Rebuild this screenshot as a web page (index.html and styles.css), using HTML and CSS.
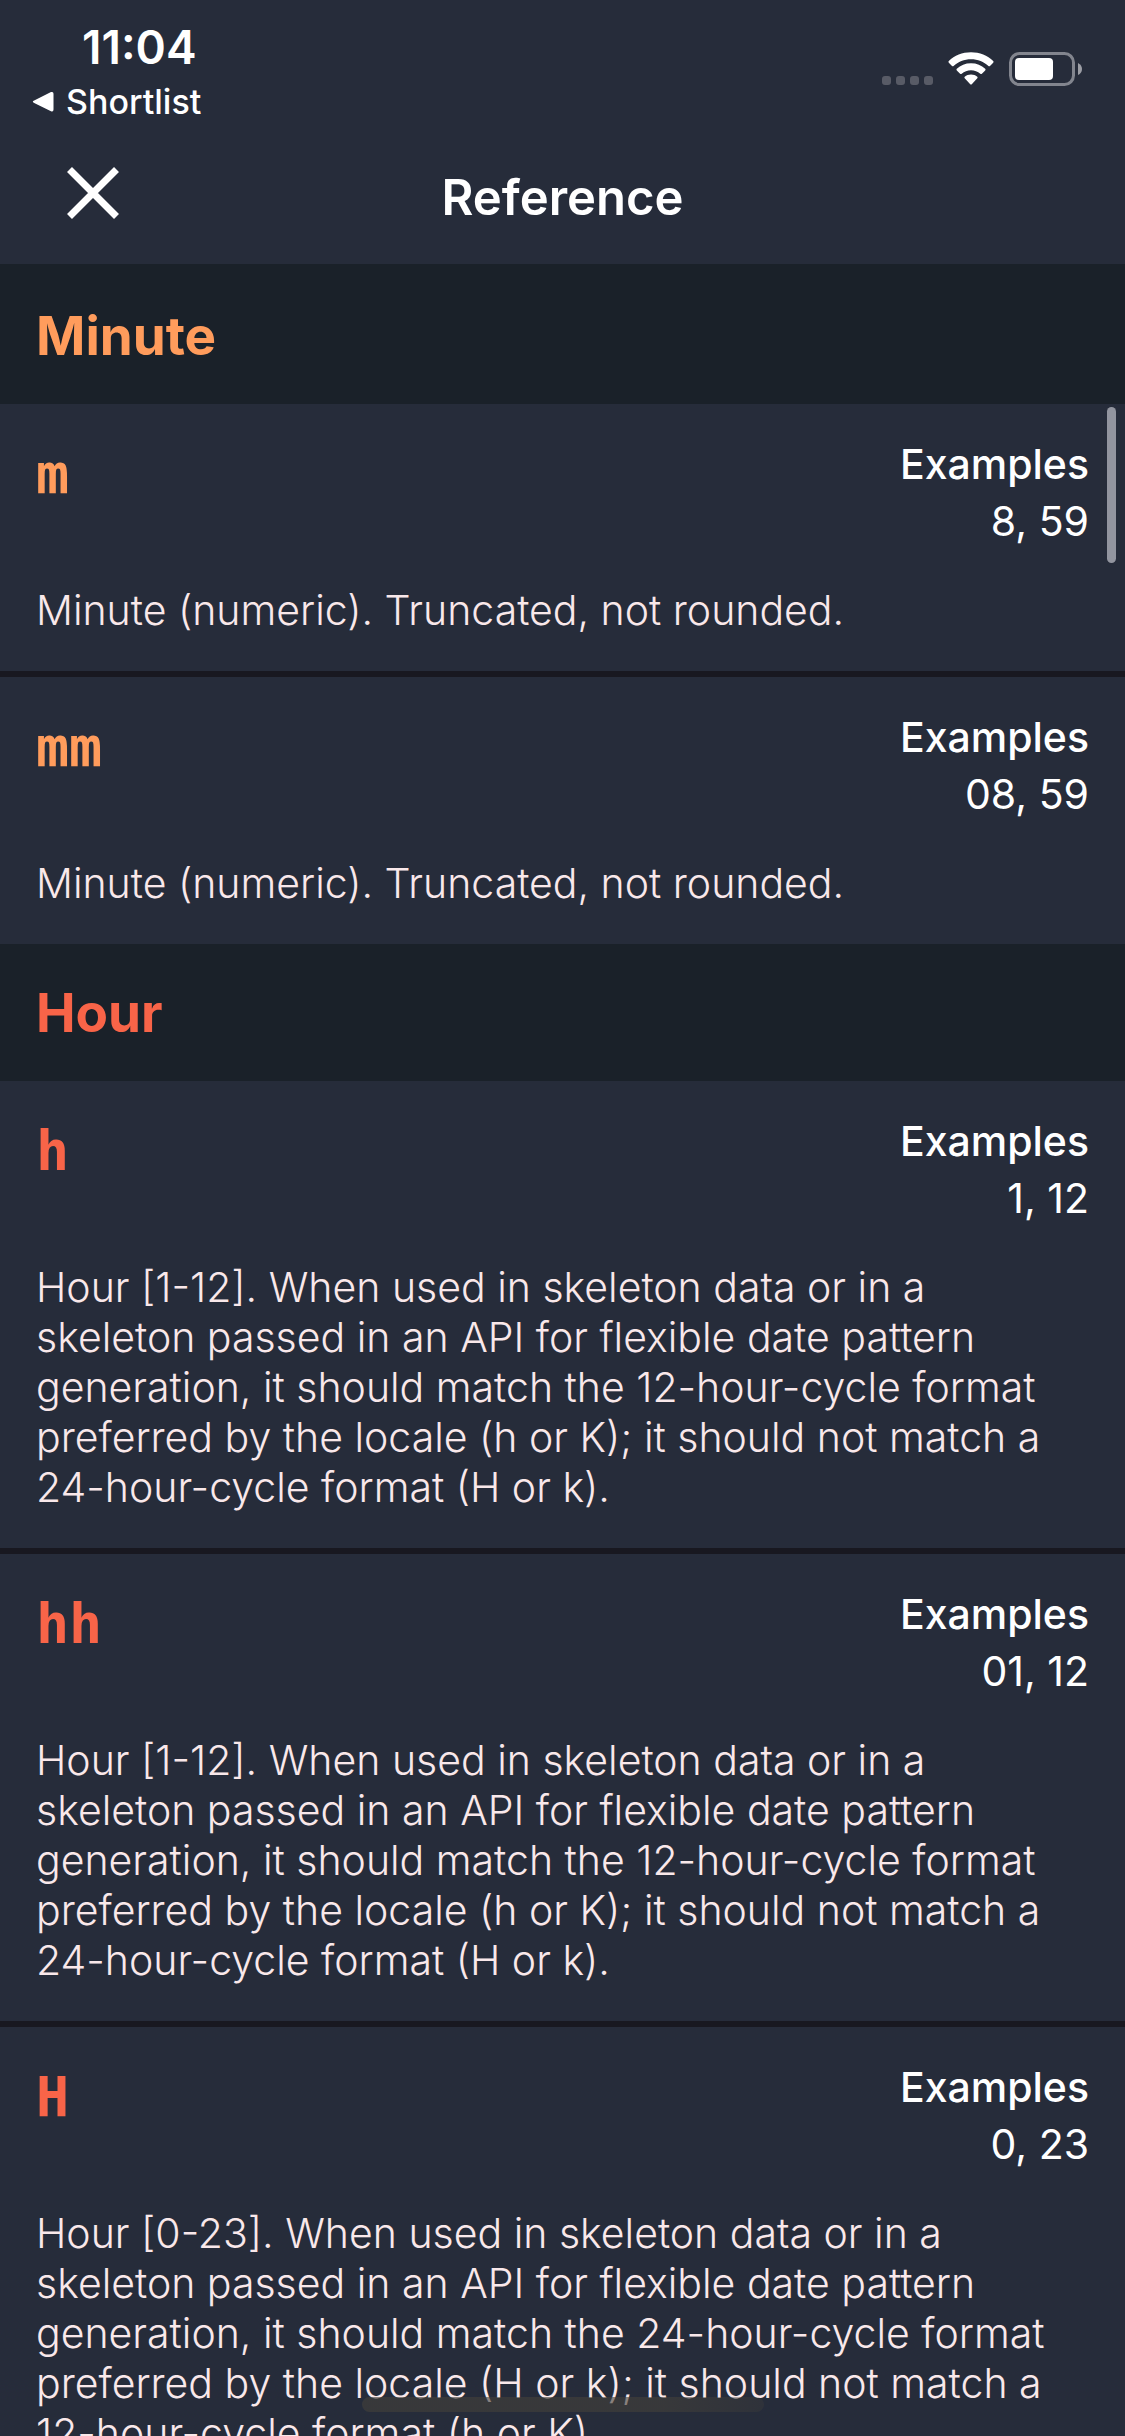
FILE: index.html
```html
<!DOCTYPE html>
<html lang="en">
<head>
<meta charset="utf-8">
<meta name="viewport" content="width=device-width, initial-scale=1">
<title>Reference</title>
<link rel="stylesheet" href="styles.css">
</head>
<body>
<div class="screen">
  <header class="top">
    <div class="status">
      <div class="status-left">
        <time class="clock">11:04</time>
        <a class="back" href="#shortlist">
          <svg class="back-arrow" width="22" height="22" viewBox="0 0 22 22" aria-hidden="true"><path d="M2.2 9.6 19 1.1Q21.5 .3 21.5 2.8V18.6Q21.5 21.2 19 20.3L2.2 12Q-.6 10.800 2.2 9.600Z" fill="#fff"/></svg>
          <span>Shortlist</span>
        </a>
      </div>
      <div class="status-right">
        <svg width="51" height="9" viewBox="0 0 51 9" class="signal" role="img" aria-label="No signal"><g fill="#585b66"><rect width="9" height="9" rx="3"/><rect x="14" width="9" height="9" rx="3"/><rect x="28" width="9" height="9" rx="3"/><rect x="42" width="9" height="9" rx="3"/></g></svg>
        <svg width="46" height="34" viewBox="0 0 46 34" class="wifi" role="img" aria-label="Wi-Fi"><path fill="#fff" d="M23 .3C31.700 .3 39.500 3.600 45.200 9Q46 9.900 45.200 10.700L42 13.900Q41.200 14.600 40.400 13.900C36 9.700 29.700 7.200 23 7.200S10 9.700 5.600 13.900Q4.800 14.600 4 13.900L.8 10.700Q0 9.900 .8 9C6.500 3.600 14.300 .3 23 .3ZM23 11.300C28.600 11.300 33.500 13.300 37.200 16.800Q38 17.600 37.200 18.400L33.900 21.700Q33.100 22.400 32.300 21.700C29.700 19.500 26.500 18.300 23 18.300S16.300 19.500 13.700 21.700Q12.900 22.400 12.100 21.700L8.800 18.400Q8 17.600 8.800 16.800C12.500 13.300 17.400 11.300 23 11.300ZM23 22.400C25.500 22.400 27.600 23.200 29.300 24.700Q30 25.400 29.300 26.200L24 31.900Q23 32.900 22 31.900L16.700 26.200Q16 25.400 16.700 24.700C18.400 23.200 20.500 22.400 23 22.400Z"/></svg>
        <svg width="74" height="34" viewBox="0 0 74 34" role="img" aria-label="Battery"><rect x="1.500" y="1.500" width="63" height="31" rx="9" fill="none" stroke="#82858e" stroke-width="3"/><rect x="6" y="6" width="38" height="22" rx="4" fill="#fff"/><path d="M69 11Q73 13 73 17T69 23Z" fill="#9c9ea5"/></svg>
      </div>
    </div>
    <div class="nav">
      <button class="close" type="button" aria-label="Close"><svg width="52" height="52" viewBox="0 0 52 52" aria-hidden="true"><path d="M2.500 2.500 49.500 49.500M49.500 2.500 2.500 49.500" stroke="#fff" stroke-width="7"/></svg></button>
      <h1 class="title">Reference</h1>
    </div>
  </header>
  <main class="list">
    <section class="group minute">
      <h2 class="group-title first">Minute</h2>
      <article class="item">
        <div class="row"><h3 class="code">m</h3><dl class="examples"><dt>Examples</dt><dd>8, 59</dd></dl></div>
        <p class="desc">Minute (numeric). Truncated, not rounded.</p>
      </article>
      <article class="item">
        <div class="row"><h3 class="code">mm</h3><dl class="examples"><dt>Examples</dt><dd>08, 59</dd></dl></div>
        <p class="desc">Minute (numeric). Truncated, not rounded.</p>
      </article>
    </section>
    <section class="group hour">
      <h2 class="group-title">Hour</h2>
      <article class="item">
        <div class="row"><h3 class="code">h</h3><dl class="examples"><dt>Examples</dt><dd>1, 12</dd></dl></div>
        <p class="desc">Hour [1-12]. When used in skeleton data or in a skeleton passed in an API for flexible date pattern generation, it should match the 12-hour-cycle format preferred by the locale (h or K); it should not match a 24-hour-cycle format (H or k).</p>
      </article>
      <article class="item">
        <div class="row"><h3 class="code">hh</h3><dl class="examples"><dt>Examples</dt><dd>01, 12</dd></dl></div>
        <p class="desc">Hour [1-12]. When used in skeleton data or in a skeleton passed in an API for flexible date pattern generation, it should match the 12-hour-cycle format preferred by the locale (h or K); it should not match a 24-hour-cycle format (H or k).</p>
      </article>
      <article class="item">
        <div class="row"><h3 class="code">H</h3><dl class="examples"><dt>Examples</dt><dd>0, 23</dd></dl></div>
        <p class="desc">Hour [0-23]. When used in skeleton data or in a skeleton passed in an API for flexible date pattern generation, it should match the 24-hour-cycle format preferred by the locale (H or k); it should not match a 12-hour-cycle format (h or K).</p>
      </article>
    </section>
    <div class="scroll-thumb"></div>
  </main>
  <div class="home-bar"></div>
</div>
</body>
</html>
```
FILE: styles.css
```css
* { box-sizing: border-box; }
body, h1, h2, h3, p, dl, dd { margin: 0; }
body {
  background: #262c3a;
  color: #fff;
  font-family: Inter, "Liberation Sans", sans-serif;
}
.screen {
  position: relative;
  display: flex;
  flex-direction: column;
  height: 100vh;
  overflow: hidden;
}
.top { flex: none; padding-bottom: 25px; }
.status {
  display: flex;
  justify-content: space-between;
  padding: 20px 42px 0 32px;
}
.status-left { display: flex; flex-direction: column; }
.clock {
  padding-left: 50px;
  font-size: 46px;
  line-height: 54px;
  font-weight: 600;
}
.back {
  display: flex;
  align-items: center;
  gap: 12px;
  margin-top: 8px;
  color: #fff;
  font-size: 34px;
  line-height: 40px;
  font-weight: 500;
  text-decoration: none;
}
.status-right {
  display: flex;
  align-items: flex-end;
  height: 66px;
  gap: 15px;
}
.signal { margin-bottom: 1px; }
.nav {
  display: grid;
  grid-template-columns: 1fr auto 1fr;
  align-items: start;
  padding: 0 67px;
  margin-top: 35px;
}
.close {
  width: 52px;
  height: 52px;
  margin: 10px 0 0;
  padding: 0;
  border: 0;
  background: none;
}
.close svg { display: block; }
.title { font-size: 49px; line-height: 82px; font-weight: 600; }
.list { position: relative; flex: 1; min-height: 0; overflow: hidden; }
.minute { --accent: #ff9c5c; }
.hour { --accent: #f86448; }
.group-title {
  padding: 38px 36px 37px;
  background: #1a2129;
  color: var(--accent);
  font-size: 53px;
  line-height: 62px;
  font-weight: 700;
}
.group-title.first { padding: 41px 36px 37px; }
.item { padding: 32px 36px 36px; }
.item + .item { border-top: 6px solid #181820; }
.row { display: flex; justify-content: space-between; }
.code {
  padding-top: 6px;
  color: var(--accent);
  font-family: "DejaVu Sans Mono", monospace;
  font-size: 55px;
  line-height: 64px;
  font-weight: 700;
}
.examples {
  font-size: 41px;
  line-height: 57px;
  text-align: right;
}
.examples dt { font-weight: 500; }
.desc {
  margin-top: 35px;
  color: #f9e8ea;
  font-size: 41px;
  line-height: 50px;
  font-weight: 300;
}
.scroll-thumb {
  position: absolute;
  top: 143px;
  right: 9px;
  width: 9px;
  height: 156px;
  border-radius: 5px;
  background: #92959f;
}
.home-bar {
  position: absolute;
  bottom: 24px;
  left: 50%;
  width: 402px;
  height: 15px;
  margin-left: -201px;
  border-radius: 8px;
  background: linear-gradient(90deg, rgba(67, 64, 58, .61) 75%, rgba(67, 64, 58, .3));
}
```
